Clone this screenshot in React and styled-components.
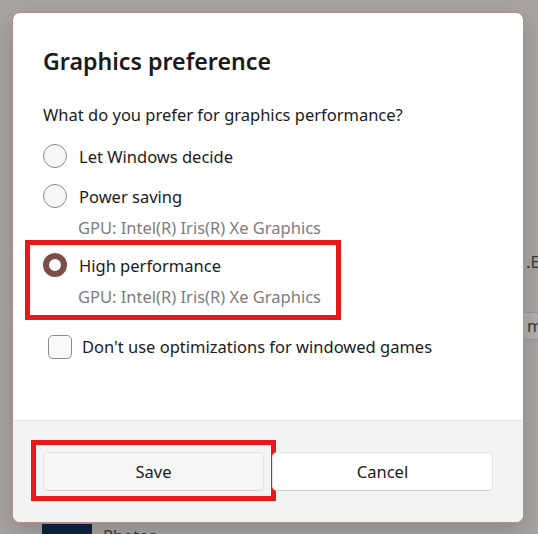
import React from 'react';
import styled, { createGlobalStyle } from 'styled-components';

const GlobalStyle = createGlobalStyle`
	* { box-sizing: border-box; }
	html, body { margin: 0; padding: 0; }
	body {
		font-family: "Segoe UI", "Noto Sans", "Open Sans", sans-serif;
		color: #1b1b1b;
		background: #a8a4a2;
	}
`;

const Page = styled.div`
	position: relative;
	width: 538px;
	height: 534px;
	overflow: hidden;
	background: #a8a4a2;
`;

const Backdrop = styled.div`
	display: flex;
	flex-direction: column;
	height: 100%;
	padding-top: 250px;
	color: #3b3938;
	font-size: 16.5px;
`;

const ExeLine = styled.div`
	padding-left: 526px;
	line-height: 24px;
	white-space: nowrap;
`;

const BandRow = styled.div`
	margin-top: 38px;
	margin-left: 524px;
	height: 28px;
	padding-left: 3px;
	line-height: 26px;
	background: #b2afae;
	border-top: 1px solid #9d9a99;
	border-bottom: 1px solid #9d9a99;
	white-space: nowrap;
`;

const AppRow = styled.div`
	margin-top: auto;
	display: flex;
	align-items: flex-start;
	gap: 11px;
	padding-left: 42px;
	height: 10px;
`;

const AppTile = styled.div`
	width: 50px;
	height: 50px;
	flex-shrink: 0;
	background: #0f2343;
`;

const AppName = styled.span`
	margin-top: 2px;
	line-height: 20px;
`;

const Dialog = styled.div`
	position: absolute;
	left: 12px;
	top: 12px;
	width: 512px;
	height: 511px;
	display: flex;
	flex-direction: column;
	background: #ffffff;
	border: 1px solid #b48e8b;
	border-radius: 8px;
	overflow: hidden;
	box-shadow: 0 8px 24px rgba(0, 0, 0, 0.18);
`;

const Body = styled.div`
	flex: 1;
	display: flex;
	flex-direction: column;
	padding: 32px 30px 0;
`;

const Title = styled.h1`
	margin: 0;
	font-size: 23.2px;
	line-height: 32px;
	font-weight: 600;
	color: #1a1a1a;
`;

const Question = styled.p`
	margin: 26px 0 9px;
	font-size: 16.5px;
	line-height: 24px;
`;

const Option = styled.label`
	display: flex;
	align-items: center;
	gap: 12px;
	height: 40px;
	font-size: 16.5px;
`;

const Radio = styled.span`
	width: 24px;
	height: 24px;
	flex-shrink: 0;
	border-radius: 50%;
	background: ${(p) => (p.checked ? '#ffffff' : '#f7f7f7')};
	border: ${(p) => (p.checked ? '6px solid #7b4e47' : '1px solid #8b8b8b')};
`;

const Sub = styled.div`
	padding-left: 35px;
	font-size: 16.5px;
	line-height: 24px;
	color: #7d7d7d;
`;

const Highlight = styled.div`
	margin-left: -18px;
	width: 316px;
	padding: 0 0 6px 13px;
	border: 5px solid #e8191c;
`;

const CheckRow = styled.label`
	display: flex;
	align-items: center;
	gap: 10px;
	margin: 15px 0 0 5px;
	font-size: 16.5px;
	line-height: 24px;
`;

const Checkbox = styled.span`
	width: 24px;
	height: 24px;
	flex-shrink: 0;
	border-radius: 5px;
	border: 1px solid #8b8b8b;
	background: #f9f9f9;
`;

const Footer = styled.div`
	display: flex;
	gap: 8px;
	height: 102px;
	padding: 31px 30px 0;
	background: #f3f3f3;
	border-top: 1px solid #e5e5e5;
`;

const SaveMark = styled.div`
	width: 245px;
	height: 61px;
	margin: -12px -12px 0;
	padding: 7px;
	border: 5px solid #e8191c;
	flex-shrink: 0;
`;

const Button = styled.button`
	width: ${(p) => (p.full ? '100%' : '221px')};
	height: 39px;
	flex-shrink: 0;
	font-family: inherit;
	font-size: 16.5px;
	color: #1b1b1b;
	background: ${(p) => (p.full ? '#f6f6f6' : '#fdfdfd')};
	border: 1px solid #e3e3e3;
	border-bottom-color: #cfcfcf;
	border-radius: 5px;
`;

export default function App() {
	return (
		<Page>
			<GlobalStyle />
			<Backdrop>
				<ExeLine>.EXE</ExeLine>
				<BandRow>m</BandRow>
				<AppRow>
					<AppTile />
					<AppName>Photos</AppName>
				</AppRow>
			</Backdrop>
			<Dialog>
				<Body>
					<Title>Graphics preference</Title>
					<Question>What do you prefer for graphics performance?</Question>
					<Option>
						<Radio />
						Let Windows decide
					</Option>
					<Option>
						<Radio />
						Power saving
					</Option>
					<Sub>GPU: Intel(R) Iris(R) Xe Graphics</Sub>
					<Highlight>
						<Option>
							<Radio checked />
							High performance
						</Option>
						<Sub>GPU: Intel(R) Iris(R) Xe Graphics</Sub>
					</Highlight>
					<CheckRow>
						<Checkbox />
						Don't use optimizations for windowed games
					</CheckRow>
				</Body>
				<Footer>
					<SaveMark>
						<Button full>Save</Button>
					</SaveMark>
					<Button>Cancel</Button>
				</Footer>
			</Dialog>
		</Page>
	);
}
